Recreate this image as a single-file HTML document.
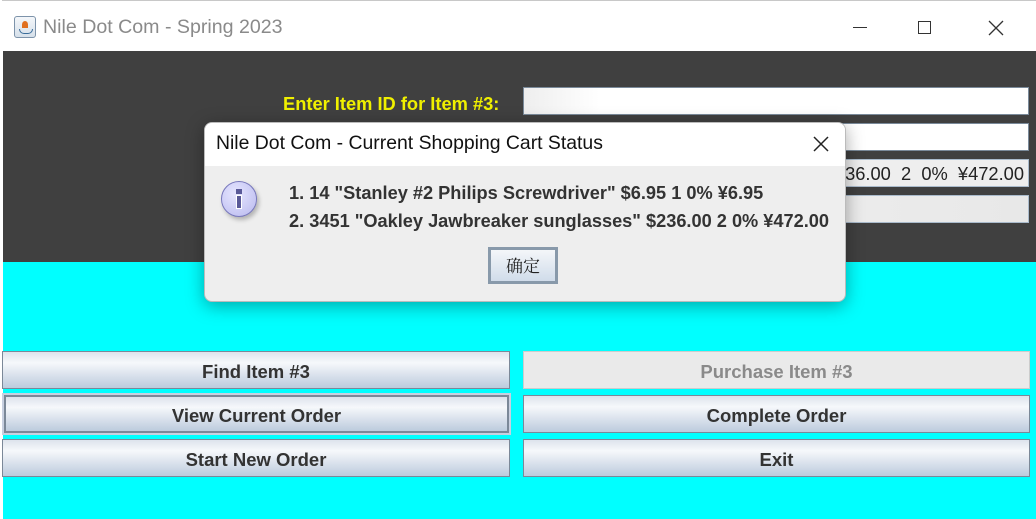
<!DOCTYPE html>
<html><head><style>
body{margin:0;width:1036px;height:519px;overflow:hidden;background:#fff;font-family:"Liberation Sans",sans-serif;position:relative}
.a{position:absolute}
.tb{left:2px;top:0;width:1034px;height:51px;background:#fff;border-top:1px solid #c8c8c8;box-sizing:border-box}
.title{left:43px;top:16px;font-size:19.6px;color:#8a8a8a;font-family:"Liberation Sans","Noto Sans CJK SC",sans-serif}
.dark{left:3px;top:51px;width:1033px;height:211px;background:#404040}
.cyan{left:3px;top:262px;width:1033px;height:257px;background:#00ffff}
.lbl{left:283px;top:93px;font-size:18.3px;font-weight:bold;color:#f0f000}
.tf{left:523px;width:506px;height:28px;box-sizing:border-box;border:1px solid #7a8a9a;background:linear-gradient(90deg,#e6e6e6,#fff 30%,#fff)}
.btn{height:38px;box-sizing:border-box;border:1px solid #7b8898;background:linear-gradient(#dde3ec,#f6f8fb 30%,#d9e1ec 65%,#bccbdd);font-weight:bold;font-size:18.5px;color:#333;text-align:center;line-height:40px}
.dlg{left:204px;top:122px;width:642px;height:180px;background:#eeeeee;border-radius:8px;box-shadow:0 4px 18px rgba(0,0,0,.35);overflow:hidden;border:1px solid #bbb;box-sizing:border-box}
.dt{left:0;top:0;width:100%;height:43px;background:#fff}
</style></head><body>
<div class="a tb"></div>
<div class="a" style="left:14px;top:16px;width:22px;height:22px;border:1px solid #7d93aa;border-radius:3px;box-sizing:border-box;background:linear-gradient(#f4f7fa,#d6e0ea)"><div style="position:absolute;left:7px;top:4px;width:6px;height:7px;background:#e07020;border-radius:50% 50% 0 0"></div><div style="position:absolute;left:4px;top:12px;width:12px;height:4px;border:1px solid #3a6d9a;border-top:none;border-radius:0 0 5px 5px"></div></div>
<div class="a title">Nile Dot Com - Spring 2023</div>
<div class="a" style="left:853px;top:27px;width:14px;height:1px;background:#333"></div>
<div class="a" style="left:918px;top:21px;width:13px;height:13px;border:1px solid #333;box-sizing:border-box"></div>
<svg class="a" style="left:988px;top:20px" width="16" height="16"><path d="M1 1L15 15M15 1L1 15" stroke="#333" stroke-width="1.3"/></svg>
<div class="a dark"></div>
<div class="a cyan"></div>
<div class="a lbl">Enter Item ID for Item #3:</div>
<div class="a tf" style="top:87px;background:linear-gradient(90deg,#eee,#fff 15%,#fff)"></div>
<div class="a tf" style="top:123px"></div>
<div class="a tf" style="top:159px;background:#eee;border-color:#aabbcc;font-size:18.3px;line-height:28px;text-align:right;padding-right:4px;color:#222">$236.00&nbsp; 2&nbsp; 0%&nbsp; ¥472.00</div>
<div class="a tf" style="top:195px;background:linear-gradient(90deg,#ccc,#eee 40%,#e8e8e8);border-color:#aabbcc"></div>
<div class="a btn" style="left:2px;top:351px;width:508px">Find Item #3</div>
<div class="a btn" style="left:523px;top:351px;width:507px;background:#eaeaea;border-color:#ccc;color:#8a8a8a">Purchase Item #3</div>
<div class="a btn" style="left:4px;top:395px;width:505px;border:2px solid #7b8898;outline:2px solid #c8d0e0;line-height:38px">View Current Order</div>
<div class="a btn" style="left:523px;top:395px;width:507px">Complete Order</div>
<div class="a btn" style="left:2px;top:439px;width:508px">Start New Order</div>
<div class="a btn" style="left:523px;top:439px;width:507px">Exit</div>
<div class="a dlg">
<div class="a dt"></div>
<div class="a" style="left:11px;top:9px;font-size:19.4px;color:#111">Nile Dot Com - Current Shopping Cart Status</div>
<svg class="a" style="left:607px;top:12px" width="18" height="18"><path d="M2 2L16 16M16 2L2 16" stroke="#222" stroke-width="1.5"/></svg>
<div class="a" style="left:16px;top:58px;width:36px;height:36px;border-radius:50%;background:radial-gradient(circle at 40% 35%,#e6e6ff,#b8b8ee);border:1px solid #7777bb;box-sizing:border-box;box-shadow:2px 3px 4px rgba(0,0,0,.25)"><div style="position:absolute;left:14px;top:7px;width:6px;height:5px;background:#5a5a99"></div><div style="position:absolute;left:14px;top:13px;width:6px;height:14px;background:#5a5a99;border:1px solid #fff;box-sizing:border-box"></div></div>
<div class="a" style="left:84px;top:56px;font-size:18.2px;font-weight:bold;color:#333;line-height:28px">1. 14 "Stanley #2 Philips Screwdriver" $6.95 1 0% ¥6.95<br>2. 3451 "Oakley Jawbreaker sunglasses" $236.00 2 0% ¥472.00</div>
<div class="a" style="left:283px;top:124px;width:70px;height:37px;border:3px solid #8899aa;box-sizing:border-box;background:linear-gradient(#f4f6f9,#d0dcea);text-align:center;line-height:30px;font-size:17px;font-family:'Noto Serif CJK SC',serif;color:#222">确定</div>
</div>
</body></html>
